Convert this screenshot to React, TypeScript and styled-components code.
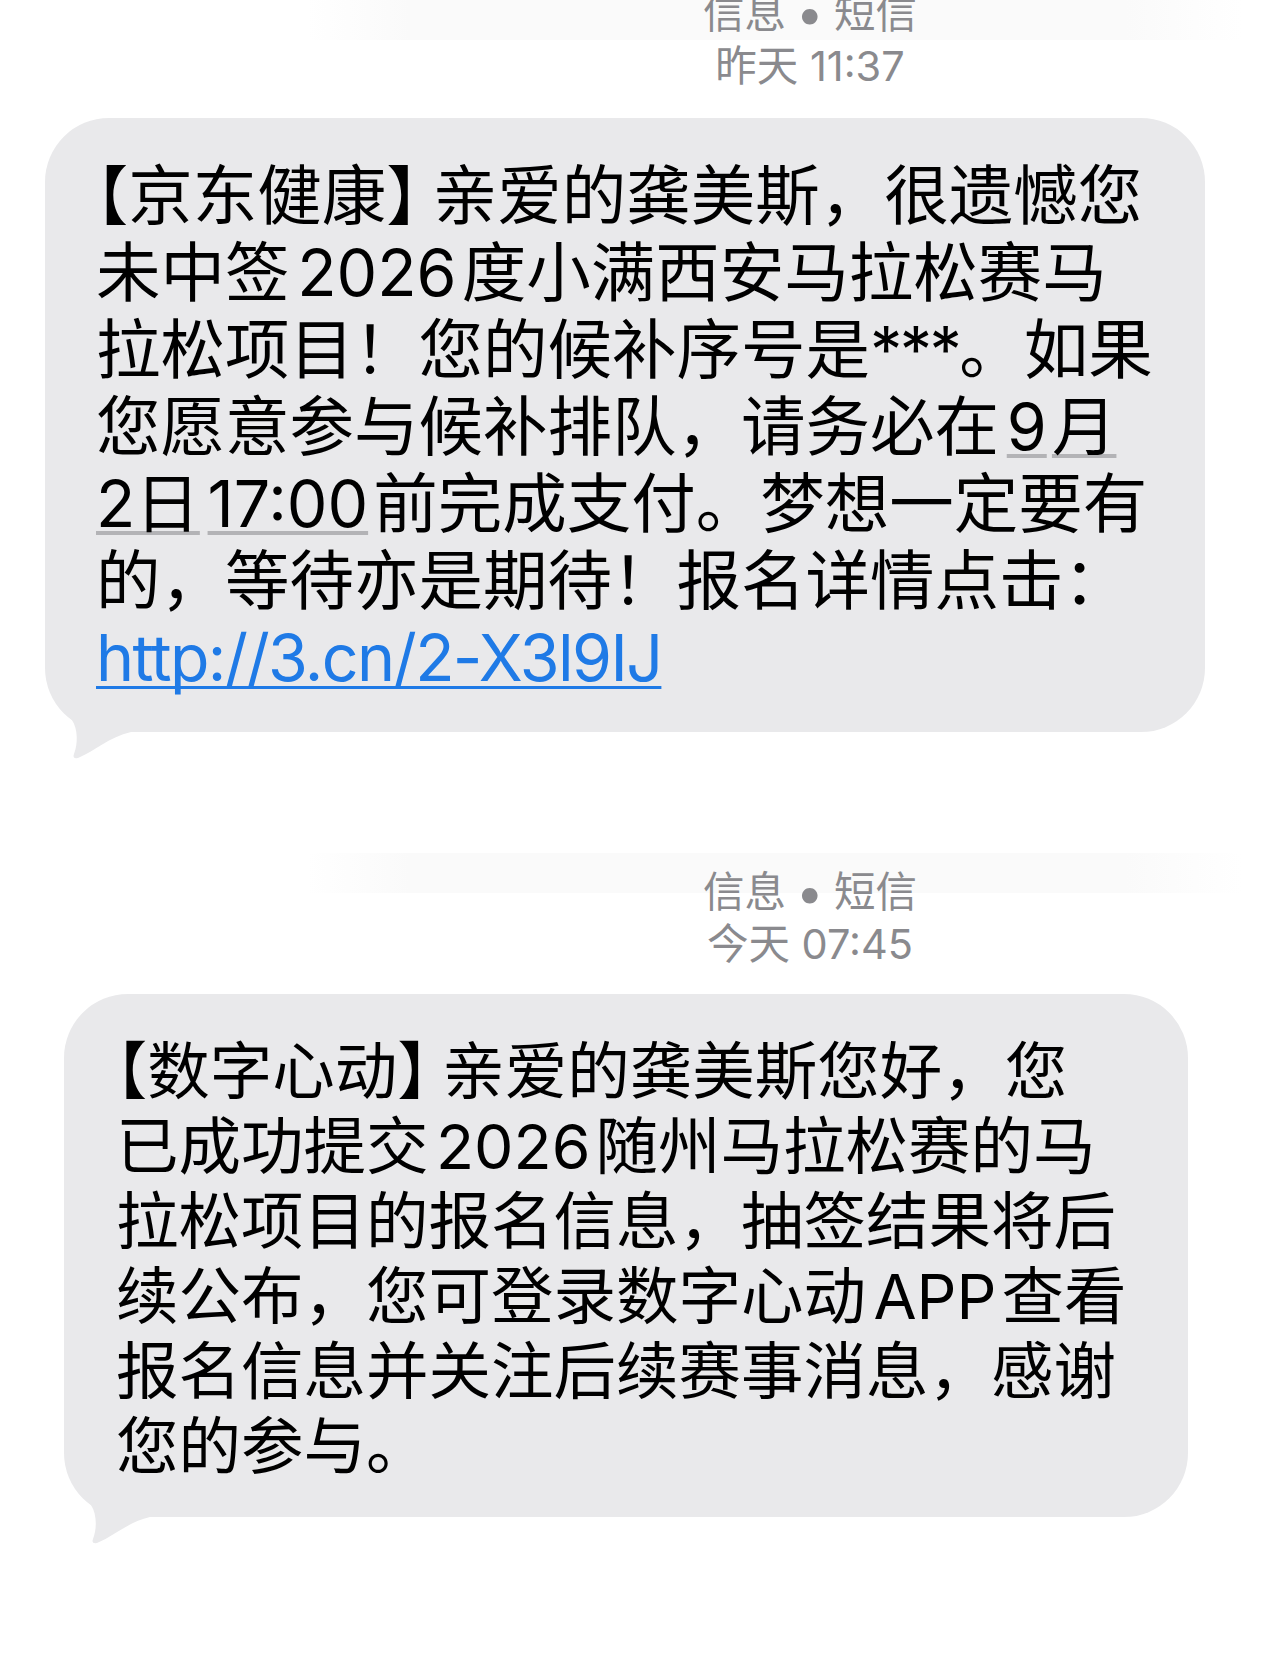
import React from "react";
import styled, { createGlobalStyle } from "styled-components";

const GlobalStyle = createGlobalStyle`
  html, body {
    margin: 0;
    padding: 0;
    background: #ffffff;
  }
  body {
    width: 1280px;
    height: 1667px;
    overflow: hidden;
    font-family: Inter, "Noto Sans CJK SC", "Noto Sans", sans-serif;
    -webkit-font-smoothing: antialiased;
  }
`;

const Page = styled.main`
  width: 1280px;
  height: 1667px;
  display: flex;
  flex-direction: column;
  overflow: hidden;
`;

const Meta = styled.header<{ $mt: number; $pt: number; $band: number; $fs: number; $lh: number }>`
  margin-top: ${(p) => p.$mt}px;
  padding: ${(p) => p.$pt}px 0 0 340px;
  text-align: center;
  font-size: ${(p) => p.$fs}px;
  line-height: ${(p) => p.$lh}px;
  color: #8a8a8e;
  background-image: linear-gradient(
    90deg,
    rgba(250, 250, 250, 0) 24%,
    #fafafa 32%,
    #fafafa 88%,
    rgba(250, 250, 250, 0) 97%
  );
  background-repeat: no-repeat;
  background-size: 100% 40px;
  background-position: 0 ${(p) => p.$band}px;
`;

const MetaLine = styled.div`
  white-space: nowrap;
`;

const Dot = styled.span`
  display: inline-block;
  margin: 0 0.3em;
  transform: scale(1.2);
`;

const Bubble = styled.section<{
  $mt: number;
  $left: number;
  $width: number;
  $fs: number;
  $lh: number;
  $pt: number;
  $pb: number;
  $pl: number;
}>`
  position: relative;
  box-sizing: border-box;
  margin-top: ${(p) => p.$mt}px;
  margin-left: ${(p) => p.$left}px;
  width: ${(p) => p.$width}px;
  padding: ${(p) => p.$pt}px 20px ${(p) => p.$pb}px ${(p) => p.$pl}px;
  background: #e9e9eb;
  border-radius: 64px;
  color: #000000;
  font-size: ${(p) => p.$fs}px;
  line-height: ${(p) => p.$lh}px;
  white-space: nowrap;
`;

const Tail = styled.svg`
  position: absolute;
  left: 0;
  bottom: -30px;
  width: 100px;
  height: 60px;
  overflow: visible;
`;

const Lead = styled.span`
  font-feature-settings: "halt";
`;

const Close = styled.span`
  font-feature-settings: "halt";
  padding-right: 0.22em;
`;

const Stars = styled.span`
  letter-spacing: -0.04em;
`;

const Latin = styled.span`
  padding: 0 0.08em 0 0.12em;
`;

const Detected = styled.span`
  text-decoration: underline;
  text-decoration-color: #b3b3b6;
  text-decoration-thickness: 4px;
  text-underline-offset: 4px;
  text-decoration-skip-ink: none;
`;

const Link = styled.a`
  color: #1f7ae6;
  text-decoration: underline;
  text-decoration-thickness: 3px;
  text-underline-offset: 5px;
  text-decoration-skip-ink: none;
  letter-spacing: -0.025em;
`;

const BubbleTail: React.FC = () => (
  <Tail viewBox="0 0 100 60" aria-hidden="true">
    <path
      d="M20 0 L20 8 L27 18 C33 27 33 42 29 52 Q27 57 33 56 C50 49 64 35 86 30 L86 0 Z"
      fill="#e9e9eb"
    />
  </Tail>
);

export default function App() {
  return (
    <>
      <GlobalStyle />
      <Page>
        <Meta $mt={-13} $pt={0} $band={13} $fs={41.5} $lh={53}>
          <MetaLine>
            信息<Dot>•</Dot>短信
          </MetaLine>
          <MetaLine>昨天 11:37</MetaLine>
        </Meta>

        <Bubble $mt={25} $left={45} $width={1160} $fs={64.5} $lh={77} $pt={40} $pb={35} $pl={51}>
          <Lead>【</Lead>京东健康<Close>】</Close>亲爱的龚美斯，很遗憾您
          <br />
          未中签<Latin>2026</Latin>度小满西安马拉松赛马
          <br />
          拉松项目！您的候补序号是<Stars>***</Stars>。如果
          <br />
          您愿意参与候补排队，请务必在
          <Detected>
            <Latin>9</Latin>月
            <br />
            2日<Latin>17:00</Latin>
          </Detected>
          前完成支付。梦想一定要有
          <br />
          的，等待亦是期待！报名详情点击：
          <br />
          <Link href="#">http://3.cn/2-X3l9IJ</Link>
          <BubbleTail />
        </Bubble>

        <Meta $mt={114} $pt={20} $band={7} $fs={41.5} $lh={52}>
          <MetaLine>
            信息<Dot>•</Dot>短信
          </MetaLine>
          <MetaLine>今天 07:45</MetaLine>
        </Meta>

        <Bubble $mt={24} $left={64} $width={1124} $fs={62.5} $lh={75} $pt={40} $pb={33} $pl={52}>
          <Lead>【</Lead>数字心动<Close>】</Close>亲爱的龚美斯您好，您
          <br />
          已成功提交<Latin>2026</Latin>随州马拉松赛的马
          <br />
          拉松项目的报名信息，抽签结果将后
          <br />
          续公布，您可登录数字心动<Latin>APP</Latin>查看
          <br />
          报名信息并关注后续赛事消息，感谢
          <br />
          您的参与。
          <BubbleTail />
        </Bubble>
      </Page>
    </>
  );
}
